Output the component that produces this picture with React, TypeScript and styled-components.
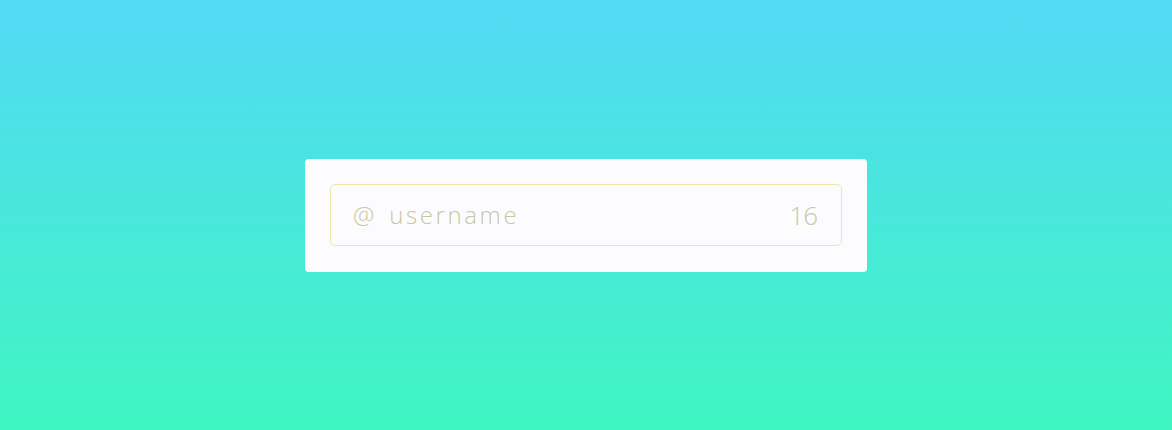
import React from 'react';
import styled, { createGlobalStyle } from 'styled-components';

const GlobalStyle = createGlobalStyle`
  html, body {
    margin: 0;
    padding: 0;
    height: 100%;
  }
  #root {
    height: 100%;
  }
`;

const Page = styled.main`
  height: 430px;
  display: flex;
  align-items: center;
  justify-content: center;
  background: linear-gradient(to bottom, #52d9f5 0%, #3ff6c1 100%);
  font-family: 'Open Sans', 'DejaVu Sans', sans-serif;
`;

const Card = styled.div`
  width: 512px;
  padding: 25px 25px 26px;
  background-color: #fcfcff;
  border-radius: 4px;
`;

const Field = styled.label`
  height: 60px;
  display: flex;
  align-items: center;
  padding: 0 24px 0 22px;
  border: 1px solid #ece9a8;
  border-radius: 5px;
  color: #c9c8a0;
  font-size: 24px;
  font-weight: 300;
`;

const AtSign = styled.span`
  margin-right: 15px;
`;

const Input = styled.input`
  flex: 1;
  min-width: 0;
  border: none;
  outline: none;
  background: transparent;
  font: inherit;
  color: inherit;
  letter-spacing: 2.6px;
  padding: 0;

  &::placeholder {
    color: #c9c8a0;
    opacity: 1;
  }
`;

const Counter = styled.span`
  margin-left: 12px;
  font-size: 26px;
  letter-spacing: -1px;
`;

const MAX_LENGTH = 16;

const App: React.FC = () => {
  const [value, setValue] = React.useState('');

  return (
    <>
      <GlobalStyle />
      <Page>
        <Card>
          <Field>
            <AtSign>@</AtSign>
            <Input
              placeholder="username"
              value={value}
              maxLength={MAX_LENGTH}
              onChange={(e) => setValue(e.target.value)}
            />
            <Counter>{MAX_LENGTH - value.length}</Counter>
          </Field>
        </Card>
      </Page>
    </>
  );
};

export default App;
